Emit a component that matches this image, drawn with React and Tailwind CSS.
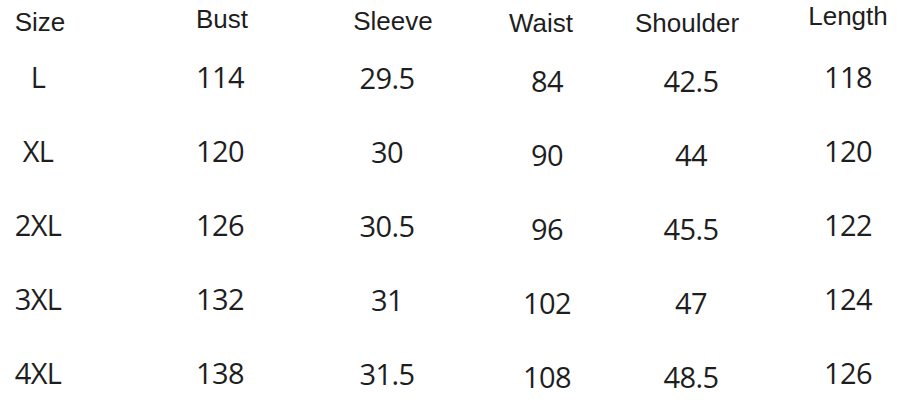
import React from "react"

const headers = [
  { label: "Size", cls: "ml-[2px] mt-[7px]" },
  { label: "Bust", cls: "ml-[106px] mt-[4px]" },
  { label: "Sleeve", cls: "ml-[95px] mt-[6px]" },
  { label: "Waist", cls: "ml-[72px] mt-[8px]" },
  { label: "Shoulder", cls: "ml-[70px] mt-[8px]" },
  { label: "Length", cls: "ml-[85px] mt-[1px]" },
]

// per column offsets for the number rows
const cols = [
  "ml-0",
  "ml-[106px]",
  "ml-[91px] pt-[1px]",
  "ml-[84px] pt-[4px]",
  "ml-[68px] pt-[4px]",
  "ml-[81px]",
]

const rows = [
  ["L", "114", "29.5", "84", "42.5", "118"],
  ["XL", "120", "30", "90", "44", "120"],
  ["2XL", "126", "30.5", "96", "45.5", "122"],
  ["3XL", "132", "31", "102", "47", "124"],
  ["4XL", "138", "31.5", "108", "48.5", "126"],
]

const App = () => {
  return (
    <div className="w-[898px] h-[420px] bg-white text-[#1e1e1e] overflow-hidden">
      <div className="flex items-start h-[40px] font-['Liberation_Sans',Arial,sans-serif] text-[26px] leading-[30px]">
        {headers.map((h) => (
          <div key={h.label} className={"w-[76px] shrink-0 flex justify-center whitespace-nowrap " + h.cls}>
            {h.label}
          </div>
        ))}
      </div>

      <div className="font-['Open_Sans',sans-serif] text-[29px] leading-[74px] tracking-[-0.6px]">
        {rows.map((row) => (
          <div key={row[0]} className="flex items-start h-[74px]">
            {row.map((val, i) => (
              <div key={i} className={"w-[76px] shrink-0 flex justify-center whitespace-nowrap " + cols[i]}>
                {val}
              </div>
            ))}
          </div>
        ))}
      </div>
    </div>
  )
}

export default App
